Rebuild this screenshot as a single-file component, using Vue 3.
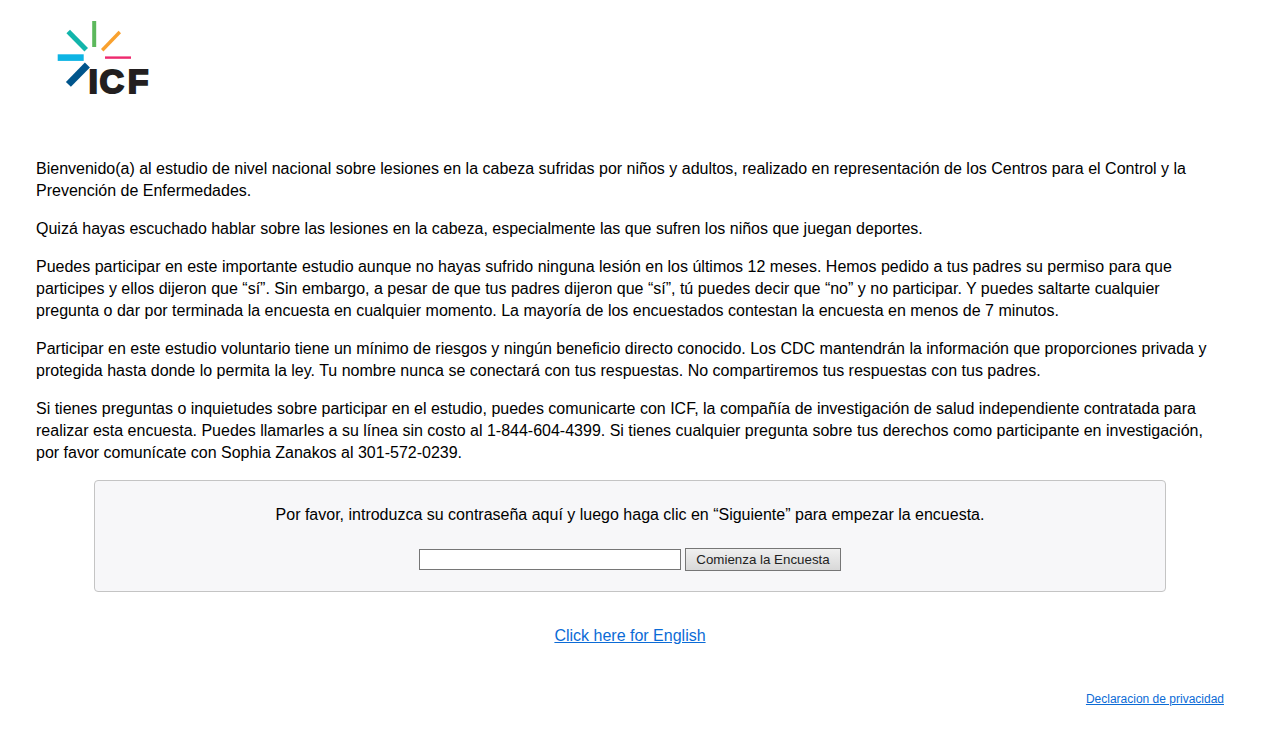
<script setup>
const paragraphs = [
  'Bienvenido(a) al estudio de nivel nacional sobre lesiones en la cabeza sufridas por niños y adultos, realizado en representación de los Centros para el Control y la Prevención de Enfermedades.',
  'Quizá hayas escuchado hablar sobre las lesiones en la cabeza, especialmente las que sufren los niños que juegan deportes.',
  'Puedes participar en este importante estudio aunque no hayas sufrido ninguna lesión en los últimos 12 meses. Hemos pedido a tus padres su permiso para que participes y ellos dijeron que “sí”. Sin embargo, a pesar de que tus padres dijeron que “sí”, tú puedes decir que “no” y no participar. Y puedes saltarte cualquier pregunta o dar por terminada la encuesta en cualquier momento. La mayoría de los encuestados contestan la encuesta en menos de 7 minutos.',
  'Participar en este estudio voluntario tiene un mínimo de riesgos y ningún beneficio directo conocido. Los CDC mantendrán la información que proporciones privada y protegida hasta donde lo permita la ley. Tu nombre nunca se conectará con tus respuestas. No compartiremos tus respuestas con tus padres.',
  'Si tienes preguntas o inquietudes sobre participar en el estudio, puedes comunicarte con ICF, la compañía de investigación de salud independiente contratada para realizar esta encuesta. Puedes llamarles a su línea sin costo al 1-844-604-4399. Si tienes cualquier pregunta sobre tus derechos como participante en investigación, por favor comunícate con Sophia Zanakos al 301-572-0239.'
]
</script>

<template>
  <div class="page">
    <svg class="logo" width="130" height="100" viewBox="40 10 130 100" role="img" aria-label="ICF">
      <rect x="92.2" y="21" width="4" height="26" fill="#5cb85c" />
      <line x1="68.2" y1="31.6" x2="86.2" y2="49.8" stroke="#12b5ab" stroke-width="5" />
      <line x1="119.8" y1="32" x2="102.2" y2="50.2" stroke="#f9a12e" stroke-width="3.4" />
      <rect x="57.7" y="54.3" width="26" height="6.6" fill="#0db4e4" />
      <rect x="105" y="56.4" width="26" height="2.4" fill="#ee2a6e" />
      <line x1="87.4" y1="65" x2="68.4" y2="84.4" stroke="#00558c" stroke-width="7" />
      <text x="88.6 99.4 127.8" y="93" class="logo-text">ICF</text>
    </svg>

    <main class="content">
      <p v-for="(text, i) in paragraphs" :key="i">{{ text }}</p>

      <section class="login">
        <p class="prompt">Por favor, introduzca su contraseña aquí y luego haga clic en “Siguiente” para empezar la encuesta.</p>
        <div class="controls">
          <input type="text" class="field" aria-label="Contraseña" />
          <button type="button" class="start">Comienza la Encuesta</button>
        </div>
      </section>

      <div class="lang"><a href="#">Click here for English</a></div>
      <div class="footer"><a href="#">Declaracion de privacidad</a></div>
    </main>
  </div>
</template>

<style scoped>
.page {
  font-family: "Liberation Sans", Arial, sans-serif;
  font-size: 16px;
  line-height: 22px;
  color: #000;
  background: #fff;
  height: 732px;
  overflow: hidden;
}
.logo {
  display: block;
  margin-left: 40px;
  padding-top: 10px;
  box-sizing: content-box;
}
.logo-text {
  font-family: "Liberation Sans", Arial, sans-serif;
  font-weight: 700;
  font-size: 34px;
  fill: #231f20;
  stroke: #231f20;
  stroke-width: 2;
}
.content {
  padding: 48px 40px 0 36px;
}
.content > p {
  margin: 0 0 16px;
}
.login {
  box-sizing: border-box;
  width: 1072px;
  height: 112px;
  margin: 0 auto;
  background: #f7f7f9;
  border: 1px solid #c4c4c4;
  border-radius: 4px;
  text-align: center;
  padding-top: 23px;
}
.prompt {
  margin: 0 0 22px;
}
.controls {
  display: flex;
  justify-content: center;
  align-items: center;
  gap: 4px;
}
.field {
  box-sizing: border-box;
  width: 262px;
  height: 21px;
  padding: 1px 2px;
  border: 1px solid #767676;
  background: #fff;
  margin: 0;
}
.start {
  box-sizing: border-box;
  width: 156px;
  height: 23px;
  padding: 0;
  margin: 0;
  border: 1px solid #767676;
  background: linear-gradient(#f0f0f0, #d8d8d8);
  font-family: "Liberation Sans", Arial, sans-serif;
  font-size: 13.33px;
  color: #222;
}
.lang {
  text-align: center;
  margin-top: 33px;
}
.lang a, .footer a {
  color: #0b6bd6;
  text-decoration: underline;
}
.footer {
  text-align: right;
  font-size: 12px;
  margin-top: 41px;
}
</style>
